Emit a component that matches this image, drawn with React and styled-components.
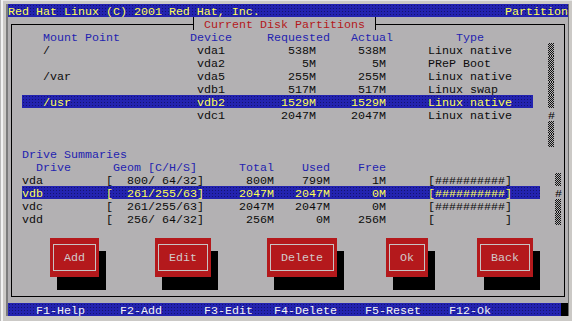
import React from 'react';
import styled, { createGlobalStyle } from 'styled-components';

// the screen is an 80x24 text grid, one cell is 7 x 13 px
const CW = 7;
const cols = (n) => `${n * CW}px`;

const GREY = '#b3b1b3';
const BLUE = '#2323b0';
const YELLOW = '#ffff55';
const RED = '#b4191c';
const INK = '#0c0c0c';

// the console's blue has a faint dither in it
const dither = `radial-gradient(circle at 1.5px 1.5px, rgba(0, 0, 30, 0.45) 0.5px, transparent 0.9px) 0 0 / 3px 3px`;

const GlobalStyle = createGlobalStyle`
  html, body {
    margin: 0;
    padding: 0;
    background: #cbc9c6;
  }
  body {
    font-family: "Liberation Mono", "DejaVu Sans Mono", monospace;
  }
`;

const Frame = styled.div`
  width: 572px;
  height: 321px;
  box-sizing: border-box;
  padding: 4px 4px 5px 8px;
  background: #cbc9c6;
  box-shadow: inset 1px 0 0 #b8b8b8, inset 3px 0 0 #f2f2f2, inset 0 1px 0 #e6e6e6;
`;

// text sits low in its cell, as with the console's bitmap font
const Screen = styled.div`
  width: 560px;
  height: 312px;
  display: flex;
  flex-direction: column;
  background: ${GREY};
  color: ${INK};
  font-size: 11.667px;
  line-height: 16px;
  white-space: pre;
  box-shadow: -2px 0 0 #7c7c7c, 1px 0 0 #6a6a6a;
`;

const Bar = styled.div`
  flex: none;
  display: flex;
  height: 13px;
  background: ${dither}, ${BLUE};
  color: ${(p) => p.$ink};
`;

const Cell = styled.span`
  flex: none;
  width: ${(p) => cols(p.$w)};
  height: 13px;
  text-align: ${(p) => p.$align || 'left'};
  background: ${(p) => (p.$black ? '#000' : 'transparent')};
`;

const Window = styled.div`
  flex: 1;
  display: flex;
  flex-direction: column;
  margin: 7px 3px 6px;
  padding-left: 3px;
  border: 1px solid #000;
`;

const TitleRow = styled.div`
  display: flex;
  height: 13px;
  margin-top: -8px;
  padding-left: 178px;
`;

const Title = styled.div`
  height: 13px;
  padding: 0 10px;
  background: ${GREY};
  color: ${RED};
  border-left: 1px solid #000;
  border-right: 1px solid #000;
`;

const Section = styled.div`
  display: flex;
  flex-direction: column;
  margin-left: ${cols(1)};
`;

const Caption = styled.div`
  height: 13px;
  color: ${BLUE};
`;

const Row = styled.div`
  display: flex;
  height: 13px;
  width: ${(p) => cols(p.$w)};
  background: ${(p) => (p.$sel ? `${dither}, ${BLUE}` : 'transparent')};
  color: ${(p) => (p.$head ? BLUE : p.$sel ? YELLOW : INK)};
`;

const ListWrap = styled.div`
  display: flex;
  align-items: flex-start;
`;

const ListBox = styled.div`
  display: flex;
  flex-direction: column;
  width: ${(p) => cols(p.$w)};
  height: ${(p) => `${p.$rows * 13}px`};
`;

const Scroll = styled.div`
  display: flex;
  flex-direction: column;
  width: ${cols(1)};
  margin-left: ${(p) => cols(p.$gap)};
`;

const ScrollCell = styled.div`
  height: 13px;
  margin-left: 1px;
  width: 6px;
  text-align: center;
  color: #000;
  background: ${(p) =>
    p.$thumb ? 'transparent' : 'repeating-conic-gradient(#111 0 25%, transparent 0 50%) 0 0 / 2px 2px'};
`;

const ButtonRow = styled.div`
  display: flex;
  margin-top: 13px;
`;

const Button = styled.div`
  flex: none;
  width: ${(p) => cols(p.$w)};
  height: 39px;
  margin-left: ${(p) => cols(p.$gap)};
  box-sizing: border-box;
  padding: 6px 3px;
  background: ${RED};
  box-shadow: 7px 13px 0 #000;
`;

const ButtonFace = styled.div`
  height: 100%;
  box-sizing: border-box;
  display: flex;
  align-items: center;
  justify-content: center;
  line-height: 13px;
  padding-top: 1px;
  border: 1px solid #c9c3c3;
  color: #d2caca;
`;

const partHead = [[3, ''], [21, 'Mount Point'], [11, 'Device'], [12, 'Requested'], [15, 'Actual'], [11, 'Type']];
const partCols = [[3], [22], [5], [12, 'right'], [10, 'right'], [6], [15]];
const parts = [
  ['/', 'vda1', '538M', '538M', 'Linux native'],
  ['', 'vda2', '5M', '5M', 'PReP Boot'],
  ['/var', 'vda5', '255M', '255M', 'Linux native'],
  ['', 'vdb1', '517M', '517M', 'Linux swap'],
  ['/usr', 'vdb2', '1529M', '1529M', 'Linux native'],
  ['', 'vdc1', '2047M', '2047M', 'Linux native'],
];

const driveHead = [[2, ''], [11, 'Drive'], [18, 'Geom [C/H/S]'], [9, 'Total'], [8, 'Used'], [26, 'Free']];
const driveCols = [[12], [14], [10, 'right'], [8, 'right'], [8, 'right'], [6], [12], [4]];
const drives = [
  ['vda', '[  800/ 64/32]', '800M', '799M', '1M', '[##########]'],
  ['vdb', '[  261/255/63]', '2047M', '2047M', '0M', '[##########]'],
  ['vdc', '[  261/255/63]', '2047M', '2047M', '0M', '[##########]'],
  ['vdd', '[  256/ 64/32]', '256M', '0M', '256M', '[          ]'],
];

const buttons = [
  ['Add', 7, 5],
  ['Edit', 8, 8],
  ['Delete', 10, 8],
  ['Ok', 6, 7],
  ['Back', 8, 7],
];

const help = [[4, ''], [12, 'F1-Help'], [12, 'F2-Add'], [10, 'F3-Edit'], [13, 'F4-Delete'], [12, 'F5-Reset'], [16, 'F12-Ok']];

const DataRow = ({ spec, values, width, sel }) => (
  <Row $w={width} $sel={sel}>
    {spec.map(([w, align], i) => (
      <Cell key={i} $w={w} $align={align}>{values[i] || ''}</Cell>
    ))}
  </Row>
);

const Scrollbar = ({ rows, thumb, gap }) => (
  <Scroll $gap={gap}>
    {Array.from({ length: rows }, (_, i) => (
      <ScrollCell key={i} $thumb={i === thumb}>{i === thumb ? '#' : ''}</ScrollCell>
    ))}
  </Scroll>
);

const HeadRow = ({ cells, width }) => (
  <Row $w={width} $head>
    {cells.map(([w, t], i) => (
      <Cell key={i} $w={w}>{t}</Cell>
    ))}
  </Row>
);

const App = () => {
  return (
    <Frame>
      <GlobalStyle />
      <Screen>
        <Bar $ink={YELLOW}>
          <Cell $w={71}>Red Hat Linux (C) 2001 Red Hat, Inc.</Cell>
          <Cell $w={9}>Partition</Cell>
        </Bar>

        <Window>
          <TitleRow>
            <Title>Current Disk Partitions</Title>
          </TitleRow>

          <Section>
            <HeadRow cells={partHead} width={73} />
            <ListWrap>
              <ListBox $w={73} $rows={8}>
                {parts.map((p, i) => (
                  <DataRow key={i} spec={partCols} values={['', p[0], p[1], p[2], p[3], '', p[4]]} width={73} sel={p[1] === 'vdb2'} />
                ))}
              </ListBox>
              <Scrollbar rows={8} thumb={5} gap={2} />
            </ListWrap>

            <Caption>Drive Summaries</Caption>
            <HeadRow cells={driveHead} width={74} />
            <ListWrap>
              <ListBox $w={74} $rows={4}>
                {drives.map((d, i) => (
                  <DataRow key={i} spec={driveCols} values={[d[0], d[1], d[2], d[3], d[4], '', d[5], '']} width={74} sel={d[0] === 'vdb'} />
                ))}
              </ListBox>
              <Scrollbar rows={4} thumb={1} gap={2} />
            </ListWrap>
          </Section>

          <ButtonRow>
            {buttons.map(([label, w, gap]) => (
              <Button key={label} $w={w} $gap={gap}>
                <ButtonFace>{label}</ButtonFace>
              </Button>
            ))}
          </ButtonRow>
        </Window>

        <Bar $ink="#f4f4f4">
          {help.map(([w, t], i) => (
            <Cell key={i} $w={w}>{t}</Cell>
          ))}
          <Cell $w={1} $black />
        </Bar>
      </Screen>
    </Frame>
  );
};

export default App;
